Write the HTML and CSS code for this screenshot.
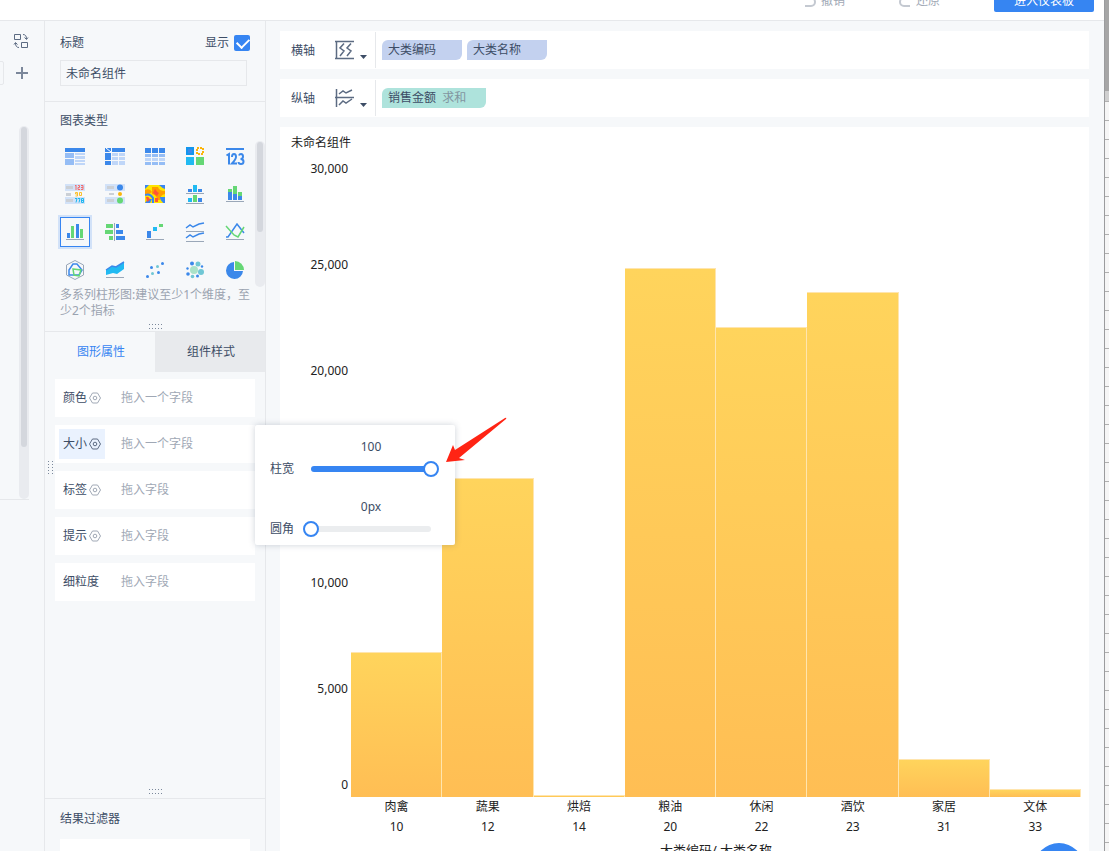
FILE: index.html
```html
<!DOCTYPE html>
<html lang="zh-CN">
<head>
  <meta charset="UTF-8" />
  <title>未命名组件</title>
  <link rel="stylesheet" href="styles.css">
</head>
<body>
  <div class="app">
    <header class="topbar">
      <button type="button" class="history">
        <svg width="12" height="12" viewBox="0 0 12 12"><path d="M1 3h6a4 4 0 0 1 0 8H1" /></svg>
        撤销
      </button>
      <button type="button" class="history">
        <svg width="12" height="12" viewBox="0 0 12 12"><path d="M11 3H5a4 4 0 0 0 0 8h6" /></svg>
        还原
      </button>
      <button type="button" class="enter">进入仪表板</button>
    </header>

    <div class="workspace">
      <!-- Field list -->
      <aside class="fields">
        <div class="search-edge"></div>
        <div class="field-tools">
          <button type="button" class="icon-btn" aria-label="切换">
            <svg width="16" height="16" viewBox="0 0 16 16"><path d="M1.500 1.500h6v5h-6zM8.500 9.500h6v5h-6zM10 1.500q3.500 0 3.500 4.500M11.500 4.500l2 2 1.500-2M6 14.500q-3.500 0-3.500-4.500M1 11.500l1.500-2 2 2" /></svg>
          </button>
          <button type="button" class="icon-btn" aria-label="添加">
            <svg width="16" height="16" viewBox="0 0 16 16"><path class="plus" d="M9 2v12M3 8h12" /></svg>
          </button>
        </div>
        <div class="field-scroll"><div class="thumb"></div></div>
      </aside>

      <!-- Settings -->
      <aside class="settings">
        <section class="title-box">
          <div class="title-row">
            <label for="compName">标题</label>
            <label class="show">显示 <input type="checkbox" checked></label>
          </div>
          <input type="text" id="compName" value="未命名组件">
        </section>

        <section class="types">
          <h2>图表类型</h2>
          <div class="type-grid">
            <button type="button" aria-label="分组表"><svg width="20" height="18" viewBox="0 0 20 18"><path class="b" d="M0 1h20v4H0z"/><path class="m" d="M0 6h9v5H0zM0 12h9v6H0z"/><path class="l" d="M10 6h10v2H10zM10 9h10v3H10zM10 13h10v2H10zM10 16h10v2H10z"/></svg></button>
            <button type="button" aria-label="交叉表"><svg width="20" height="18" viewBox="0 0 20 18"><path class="b" d="M0 1h6v4H0zM7 1h13v4H7zM0 6h6v7H0zM0 14h6v4H0z"/><path class="l" d="M7 6h6v3H7zM14 6h6v3h-6zM7 10h6v3H7zM14 10h6v3h-6zM7 14h6v4H7zM14 14h6v4h-6z"/><path class="w" d="M1 1l5 4"/></svg></button>
            <button type="button" aria-label="明细表"><svg width="20" height="18" viewBox="0 0 20 18"><path class="b" d="M0 1h6v5H0zM7 1h6v5H7zM14 1h6v5h-6z"/><path class="m" d="M0 7h6v3H0zM7 7h6v3H7zM14 7h6v3h-6zM0 15h6v3H0zM7 15h6v3H7zM14 15h6v3h-6z"/><path class="l" d="M0 11h6v3H0zM7 11h6v3H7zM14 11h6v3h-6z"/></svg></button>
            <button type="button" aria-label="颜色表格"><svg width="20" height="18" viewBox="0 0 20 18"><path fill="#1296ed" d="M1 0h8v8H1z"/><path class="b" d="M3 2h4v4H3z"/><path class="dots" d="M12 1h6v6h-6z"/><path class="c" d="M1 10h8v8H1z"/><path class="g" d="M11 10h8v8h-8z"/></svg></button>
            <button type="button" aria-label="指标卡"><svg width="20" height="18" viewBox="0 0 20 18"><path class="b" d="M1 1h18v2H1z"/><path class="s two" d="M1.500 8.500L4 7v10.500M7 10q0-3 2-3t2 3q0 2-4 6.500h5M14 8.500Q14.500 7 16 7q2 0 2 2.500T15.500 12q3 0 3 2.500t-2.500 2.500-2.500-2"/></svg></button>

            <button type="button" aria-label="KPI 指标卡"><svg width="20" height="20" viewBox="0 0 20 20"><path class="l pale" d="M0 0h20v7H0zM0 13h20v7H0z"/><path class="grey" d="M1 2h7v3H1zM1 9h5v3H1zM1 15h7v3H1z"/><path stroke="#f46b6b" d="M11 1v5M10 1.500h1M13 1.500h1.500V3.500h-1.500v2h2M16 1.500h2v4h-2M16 3.500h2"/><path stroke="#fbc02d" d="M12.500 10h-2V8.500h2V12h-2M14.500 8.500h2v3h-2z"/><path stroke="#1eb8f0" d="M10 14.500h2l-1 4M13 14.500h2l-1 4M16.500 14.500h2v4h-2zM16 16.500h2"/></svg></button>
            <button type="button" aria-label="标记表"><svg width="20" height="20" viewBox="0 0 20 20"><path class="l pale" d="M0 0h20v7H0zM0 13h20v7H0z"/><path class="grey" d="M2 2h7v3H2zM4 9h5v2H4zM2 15h7v3H2z"/><circle class="b" cx="15" cy="3.500" r="3"/><circle class="y" cx="15" cy="10" r="2"/><circle class="g" cx="15" cy="16.500" r="3"/></svg></button>
            <button type="button" aria-label="热力图"><svg width="20" height="18" viewBox="0 0 20 18"><path fill="#ffe600" d="M0 0h20v18H0z"/><path fill="#3986f3" d="M0 0h4L0 4zM14 0h6v4q-3-1-6-4zM16 12h4v6h-2zM3 14h4l-2 4H0z"/><path fill="#ff9d00" d="M7 2h6q1 4 7 4v3q-5 1-5 6h-3q0-5-5-6zM0 5q5-2 7 2L4 9H0z"/><path fill="#ff5438" d="M10 4q2 3 4 4l-2 3-4-3zM1 12q3-1 4 3l-3 2zM10 13h3v4h-3z"/><path stroke="#3986f3" stroke-width="2" d="M0 10q5-2 8 3v5M16 12q0 3 3 5"/></svg></button>
            <button type="button" aria-label="分区柱形图"><svg width="20" height="20" viewBox="0 0 20 20"><path class="b" d="M3 5h4v3H3zM13 5h4v3h-4zM13 14h4v4h-4z"/><path class="c" d="M8 1h4v7H8zM3 14h4v4H3z"/><path class="g" d="M8 11h4v7H8z"/><path class="axis" d="M1 9.500h18M1 19.500h18"/></svg></button>
            <button type="button" aria-label="堆积柱形图"><svg width="20" height="18" viewBox="0 0 20 18"><path class="g" d="M3 4h4v3H3zM8 1h4v8H8zM13 7h4v4h-4z"/><path class="b" d="M3 7h4v8H3zM8 9h4v6H8zM13 11h4v4h-4z"/><path class="axis" d="M1 16.500h18"/></svg></button>

            <button type="button" class="picked" aria-label="多系列柱形图"><svg width="20" height="18" viewBox="0 0 20 18"><path class="b" d="M2 10h3v5H2zM11 1h3v14h-3z"/><path class="g" d="M6 3h3v12H6zM15 6h3v9h-3z"/><path class="axis" d="M1 16.500h18"/></svg></button>
            <button type="button" aria-label="对比柱形图"><svg width="20" height="18" viewBox="0 0 20 18"><path class="g" d="M1 1h7v4H1zM0 7h8v4H0zM4 13h4v4H4z"/><path class="b" d="M11 1h3v4h-3zM11 7h7v4h-7zM11 13h9v4h-9z"/><path class="axis" d="M9.500 0v18"/></svg></button>
            <button type="button" aria-label="瀑布图"><svg width="20" height="18" viewBox="0 0 20 18"><path class="b" d="M2 8h4v7H2z"/><path class="c" d="M8 4h4v4H8z"/><path class="g" d="M14 1h4v3h-4z"/><path class="axis" d="M1 16.500h18"/></svg></button>
            <button type="button" aria-label="分区折线图"><svg width="20" height="20" viewBox="0 0 20 20"><path class="s" d="M1 6l4-3 3 2 6-3 5-1M1 16l4-3 3 2 6-3 5-1"/><path class="axis" d="M1 9.500h18M1 19.500h18"/></svg></button>
            <button type="button" aria-label="折线图"><svg width="20" height="18" viewBox="0 0 20 18"><path class="s" d="M1 14h2L12 1l7 9"/><path class="s green" d="M1 3l8 9 4 2 6-10"/><path class="axis" d="M1 16.500h18"/></svg></button>

            <button type="button" aria-label="雷达图"><svg width="20" height="20" viewBox="0 0 20 20"><path class="axis" d="M10 .5l8.500 4.500v10L10 19.500 1.500 15V5z"/><path class="s" d="M8 4h4l5 6-3 5H4l0-5z"/><path class="s green" d="M8 9l8 1-2 6-5-1z"/></svg></button>
            <button type="button" aria-label="面积图"><svg width="20" height="18" viewBox="0 0 20 18"><path class="c" d="M1 9l6-4 4 1 8-5v7l-7 5-4-1-7 2z"/><path class="s" d="M1 9l6-4 4 1 8-5"/><path class="axis" d="M1 16.500h18"/></svg></button>
            <button type="button" aria-label="散点图"><svg width="20" height="18" viewBox="0 0 20 18"><g class="b"><circle cx="2.500" cy="15.500" r="1.500"/><circle cx="6.500" cy="6.500" r="1.500"/><circle cx="13.500" cy="11.500" r="1.500"/><circle cx="17.500" cy="2.500" r="1.500"/></g><g fill="#70c7d5"><circle cx="12.500" cy="5.500" r="1.500"/><circle cx="7.500" cy="12.500" r="1.500"/></g></svg></button>
            <button type="button" aria-label="气泡图"><svg width="20" height="18" viewBox="0 0 20 18"><circle fill="#aae2c8" cx="9" cy="9" r="4"/><g fill="#70c7d5"><circle cx="13" cy="3" r="2.500"/><circle cx="16" cy="11" r="3"/><circle cx="7.500" cy="15.500" r="1.800"/></g><g class="b"><circle cx="7" cy="2.500" r="2"/><circle cx="2.500" cy="7.500" r="1.200"/><circle cx="3" cy="13" r="1.800"/><circle cx="12.500" cy="15" r="1.500"/><circle cx="17" cy="5.500" r="1.200"/></g></svg></button>
            <button type="button" aria-label="饼图"><svg width="20" height="18" viewBox="0 0 20 18"><path class="b" d="M9 1a8.500 8.500 0 1 0 9 9H9z"/><path class="g" d="M10 0a9 9 0 0 1 9 9h-9z"/></svg></button>
          </div>
          <p class="hint">多系列柱形图:建议至少1个维度，至少2个指标</p>
          <div class="grip"></div>
          <div class="type-scroll"><div class="thumb"></div></div>
        </section>

        <nav class="tabs">
          <button type="button" class="tab active">图形属性</button>
          <button type="button" class="tab">组件样式</button>
        </nav>

        <section class="props">
          <div class="prop">
            <button type="button" class="prop-name">颜色 <svg class="gear" width="12" height="12" viewBox="0 0 12 12"><path d="M3.500 1h5L11.500 6 8.500 11h-5L.5 6z"/><circle cx="6" cy="6" r="1.800"/></svg></button>
            <span>拖入一个字段</span>
          </div>
          <div class="prop">
            <button type="button" class="prop-name open">大小 <svg class="gear" width="12" height="12" viewBox="0 0 12 12"><path d="M3.500 1h5L11.500 6 8.500 11h-5L.5 6z"/><circle cx="6" cy="6" r="1.800"/></svg></button>
            <span>拖入一个字段</span>
            <div class="popover">
              <output for="barWidth">100</output>
              <div class="slide-row">
                <label for="barWidth">柱宽</label>
                <div class="track full"><input type="range" id="barWidth" min="0" max="100" value="100"></div>
              </div>
              <output for="barRadius">0px</output>
              <div class="slide-row">
                <label for="barRadius">圆角</label>
                <div class="track"><input type="range" id="barRadius" min="0" max="100" value="0"></div>
              </div>
              <svg class="arrow" width="62" height="48" viewBox="0 0 62 48"><path d="M1 45L8 28l2 5L60 1q2-1 1 1L14 41l6 2z"/></svg>
            </div>
          </div>
          <div class="prop">
            <button type="button" class="prop-name">标签 <svg class="gear" width="12" height="12" viewBox="0 0 12 12"><path d="M3.500 1h5L11.500 6 8.500 11h-5L.5 6z"/><circle cx="6" cy="6" r="1.800"/></svg></button>
            <span>拖入字段</span>
          </div>
          <div class="prop">
            <button type="button" class="prop-name">提示 <svg class="gear" width="12" height="12" viewBox="0 0 12 12"><path d="M3.500 1h5L11.500 6 8.500 11h-5L.5 6z"/><circle cx="6" cy="6" r="1.800"/></svg></button>
            <span>拖入字段</span>
          </div>
          <div class="prop">
            <button type="button" class="prop-name">细粒度</button>
            <span>拖入字段</span>
          </div>
          <div class="grip"></div>
          <div class="grip side"></div>
        </section>

        <section class="filters">
          <h2>结果过滤器</h2>
          <div class="filter-drop"></div>
        </section>
      </aside>

      <!-- Axes and chart -->
      <main class="board">
        <div class="axis-row">
          <span class="axis-name">横轴</span>
          <button type="button" class="axis-kind" aria-label="横轴类型">
            <svg width="34" height="22" viewBox="0 0 34 22"><path d="M1 2.500h19M1 19.500h19M2.500 2v18M10 4.500L6 9l4 3-4 5M17 4.500L13 9l4 3-4 5"/><path class="caret" d="M26 16h7l-3.500 4z"/></svg>
          </button>
          <div class="pills">
            <span class="pill">大类编码</span>
            <span class="pill">大类名称</span>
          </div>
        </div>
        <div class="axis-row">
          <span class="axis-name">纵轴</span>
          <button type="button" class="axis-kind" aria-label="纵轴类型">
            <svg width="34" height="22" viewBox="0 0 34 22"><path d="M2.500 2v18M1 10.500h19M5 7l4-3 3 2 6-3M5 18l4-4 3 2 6-4"/><path class="caret" d="M26 16h7l-3.500 4z"/></svg>
          </button>
          <div class="pills">
            <span class="pill measure">销售金额 <em>求和</em></span>
          </div>
        </div>

        <section class="chart">
          <h1>未命名组件</h1>
          <div class="plot">
            <div class="y-axis">
              <span>30,000</span>
              <span>25,000</span>
              <span>20,000</span>
              <span>15,000</span>
              <span>10,000</span>
              <span>5,000</span>
              <span>0</span>
            </div>
            <div class="bars" id="bars"></div>
          </div>
          <div class="x-axis">
            <div class="x-labels" id="labels"></div>
            <div class="x-title">大类编码/ 大类名称</div>
          </div>
        </section>
      </main>
    </div>
    <button type="button" class="float" aria-label="帮助"></button>
  </div>
  <div class="backdrop"></div>

  <script>
    const max = 30000;
    const rows = [
      ['肉禽', 10, 6800],
      ['蔬果', 12, 15000],
      ['烘焙', 14, 90],
      ['粮油', 20, 24880],
      ['休闲', 22, 22100],
      ['酒饮', 23, 23740],
      ['家居', 31, 1790],
      ['文体', 33, 370],
    ];

    const bars = document.getElementById('bars');
    const labels = document.getElementById('labels');

    rows.forEach(([name, code, value]) => {
      const bar = document.createElement('div');
      bar.className = 'bar';
      bar.style.height = `${value / max * 100}%`;
      bars.appendChild(bar);

      const label = document.createElement('div');
      label.innerHTML = `<div>${name}</div><div>${code}</div>`;
      labels.appendChild(label);
    });
  </script>
</body>
</html>
```
FILE: styles.css
```css
* {
  box-sizing: border-box;
}
body {
  margin: 0;
  display: flex;
  height: 100vh;
  overflow: hidden;
  font-family: "Noto Sans", "Noto Sans CJK SC", sans-serif;
  font-size: 12px;
  line-height: 20px;
  color: #3d4d66;
}
button, input {
  font: inherit;
  color: inherit;
}
button {
  padding: 0;
  border: 0;
  background: none;
  cursor: pointer;
}
svg {
  display: block;
  fill: none;
}
h1, h2 {
  margin: 0;
  font-size: 12px;
  font-weight: 400;
}

.app {
  position: relative;
  flex: 1;
  min-width: 0;
  display: flex;
  flex-direction: column;
  background: #f6f8fa;
  overflow: hidden;
}
.backdrop {
  width: 5px;
  border-left: 1px solid #9b9c9e;
  background:
    linear-gradient(#a6a6a6 91px, #cfcfcf 91px, #cfcfcf 101px, transparent 101px),
    repeating-linear-gradient(#f6f6f6 0, #f6f6f6 6px, #b0b0b0 6px, #b0b0b0 7px, #f6f6f6 7px, #f6f6f6 19px);
}

/* top bar */
.topbar {
  height: 21px;
  flex: none;
  display: flex;
  justify-content: flex-end;
  align-items: flex-end;
  padding: 0 10px 8px 0;
  border-bottom: 1px solid #e6e8eb;
  background: #fff;
}
.history {
  display: flex;
  align-items: center;
  gap: 5px;
  height: 24px;
  margin-right: 54px;
  padding-top: 2px;
  color: #a0a8b5;
}
.history svg {
  stroke: #c4c9d1;
  stroke-width: 2;
}
.enter {
  width: 100px;
  height: 24px;
  padding-top: 2px;
  border-radius: 2px;
  background: #3685f2;
  color: #fff;
}

.workspace {
  flex: 1;
  min-height: 0;
  display: flex;
}

/* left strip */
.fields {
  width: 44px;
  flex: none;
  position: relative;
}
.field-tools {
  display: flex;
  flex-direction: column;
  gap: 16px;
  padding: 12px 0 0 13px;
  height: 105px;
}
.icon-btn {
  width: 16px;
  height: 16px;
  stroke: #5c6b82;
}
.plus {
  stroke-width: 2;
  stroke: #7b879a;
}
.search-edge {
  position: absolute;
  top: 40px;
  left: -4px;
  width: 8px;
  height: 24px;
  border: 1px solid #e6e8eb;
  border-radius: 2px;
}
.field-scroll {
  width: 29px;
  height: 374px;
  padding-left: 19px;
  border-bottom: 1px solid #e6e8eb;
}
.field-scroll::before {
  content: "";
  display: block;
  height: 373px;
  margin-bottom: -373px;
  border-radius: 5px;
  background: #e9ebef;
}
.thumb {
  position: relative;
  width: 6px;
  margin: 1px 2px;
  border-radius: 3px;
  background: #d4d7dd;
}
.field-scroll .thumb {
  height: 320px;
}

/* settings panel */
.settings {
  width: 222px;
  flex: none;
  display: flex;
  flex-direction: column;
  border: solid #e6e8eb;
  border-width: 0 1px;
}
.title-box {
  height: 81px;
  padding: 12px 15px 0;
  border-bottom: 1px solid #e6e8eb;
}
.title-row {
  display: flex;
  justify-content: space-between;
  align-items: center;
}
.show {
  display: flex;
  align-items: center;
  gap: 5px;
}
.show input {
  appearance: none;
  width: 16px;
  height: 16px;
  margin: 0;
  border-radius: 2px;
  background: #3685f2;
}
.show input:checked::before {
  content: "";
  display: block;
  width: 10px;
  height: 6px;
  margin: 3px;
  border: solid #fff;
  border-width: 0 0 2px 2px;
  transform: rotate(-45deg);
}
.title-box input[type="text"] {
  display: block;
  width: 187px;
  height: 26px;
  margin-top: 7px;
  padding: 0 5px 1px;
  border: 1px solid #e6e8eb;
  background: none;
}
.types {
  position: relative;
  height: 230px;
  padding: 9px 10px 0;
  border-bottom: 1px solid #e6e8eb;
}
.types h2 {
  padding-left: 5px;
}
.type-grid {
  display: grid;
  grid-template-columns: repeat(5, 40px);
  grid-auto-rows: 38px;
  margin-top: 6px;
}
.type-grid button {
  display: flex;
  align-items: center;
  justify-content: center;
}
.type-grid .picked {
  width: 30px;
  height: 30px;
  margin: 4px 5px;
  border: 1px solid #3685f2;
  box-shadow: 0 0 0 2px #d2e2f8;
}
.b { fill: #3b88ea; }
.m { fill: #95bdf5; }
.l { fill: #bfd6f8; }
.pale { fill: #d2e2f8; }
.c { fill: #21baf2; }
.g { fill: #65d775; }
.y { fill: #fbb50a; }
.grey { fill: #cbd0d6; }
.w { stroke: #fff; }
.s { stroke: #3b88ea; stroke-width: 1.5; }
.two { stroke-width: 2; }
.green { stroke: #65d775; }
.axis { stroke: #9aa7b8; }
.dots { stroke: #fbb50a; stroke-width: 2; stroke-dasharray: 2 1; }
.hint {
  margin: -2px 0 0;
  padding: 0 3px 0 5px;
  line-height: 16px;
  color: #9ba3b0;
}
.grip {
  width: 13px;
  height: 5px;
  margin: 5px auto 0;
  background: repeating-linear-gradient(90deg, #7b889b 0 1px, transparent 1px 3px);
  mask: linear-gradient(#000 1px, transparent 1px, transparent 4px, #000 4px);
}
.type-scroll {
  position: absolute;
  top: 39px;
  right: 0;
  width: 10px;
  height: 146px;
  border-radius: 5px;
  background: #e9ebef;
}
.type-scroll .thumb {
  height: 90px;
}
.tabs {
  display: flex;
  height: 40px;
}
.tab {
  flex: 1;
  padding-left: 2px;
  background: #e8eaed;
}
.tab.active {
  background: none;
  color: #3685f2;
}
.props {
  position: relative;
  flex: 1;
  display: flex;
  flex-direction: column;
  gap: 8px;
  padding: 7px 10px 4px;
  border-bottom: 1px solid #e6e8eb;
}
.prop {
  position: relative;
  display: flex;
  align-items: center;
  height: 38px;
  padding: 0 4px;
  background: #fff;
  color: #a0a8b5;
}
.prop-name {
  display: flex;
  align-items: center;
  gap: 2px;
  width: 46px;
  height: 30px;
  margin-right: 16px;
  padding-left: 4px;
  white-space: nowrap;
  color: #3d4d66;
}
.prop-name.open {
  background: #eaf2fe;
}
.gear {
  stroke: #a0a8b5;
}
.open .gear {
  stroke: #5c6b82;
}
.props .grip {
  margin-top: auto;
}
.props .grip.side {
  position: absolute;
  top: 93px;
  left: -1px;
  margin: 0;
  transform: rotate(90deg);
}

/* size popover */
.popover {
  position: absolute;
  z-index: 2;
  top: 0;
  left: 100%;
  width: 200px;
  height: 120px;
  padding: 12px 24px 0 15px;
  border-radius: 2px;
  background: #fff;
  box-shadow: 0 0 6px rgba(61, 77, 102, 0.25);
  color: #3d4d66;
}
.popover output {
  display: block;
  width: 120px;
  height: 22px;
  margin-left: auto;
  text-align: center;
}
.slide-row {
  display: flex;
  align-items: center;
  justify-content: space-between;
  height: 20px;
  margin-bottom: 18px;
}
.track {
  display: flex;
  align-items: center;
  width: 120px;
  height: 6px;
  border-radius: 3px;
  background: #ebedef;
}
.track.full {
  background: #3685f2;
}
.track input {
  appearance: none;
  flex: none;
  width: 136px;
  height: 16px;
  margin: 0 -8px;
  background: none;
}
.track input::-webkit-slider-thumb {
  appearance: none;
  width: 16px;
  height: 16px;
  border: 2px solid #3685f2;
  border-radius: 50%;
  background: #fff;
}
.arrow {
  position: absolute;
  top: -8px;
  left: 190px;
  fill: #ff2414;
}

.filters {
  height: 52px;
  flex: none;
  padding: 10px 15px 0;
  overflow: hidden;
}
.filter-drop {
  height: 40px;
  margin-top: 10px;
  background: #fff;
}

/* axis rows and chart */
.board {
  flex: 1;
  min-width: 0;
  display: flex;
  flex-direction: column;
  gap: 10px;
  padding: 10px 15px 0 14px;
}
.axis-row {
  display: flex;
  align-items: center;
  height: 38px;
  flex: none;
  padding-left: 11px;
  background: #fff;
}
.axis-name {
  width: 43px;
  padding-top: 2px;
}
.axis-kind {
  display: flex;
  align-items: center;
  width: 42px;
  height: 36px;
  border-right: 1px solid #e6e8eb;
}
.axis-kind svg {
  stroke: #5c6b82;
  stroke-width: 1.5;
}
.axis-kind .caret {
  fill: #3d4d66;
  stroke: none;
}
.pills {
  display: flex;
  gap: 5px;
  padding-left: 6px;
}
.pill {
  min-width: 80px;
  padding: 0 20px 0 6px;
  border-radius: 6px 0;
  background: #c3d1ef;
}
.pill.measure {
  background: #aee3dc;
}
.pill em {
  margin-left: 3px;
  font-style: normal;
  color: #8295a0;
}
.chart {
  flex: 1;
  min-height: 0;
  display: flex;
  flex-direction: column;
  padding: 6px 8px 0 11px;
  background: #fff;
  color: #222;
}
.plot {
  flex: 1;
  min-height: 0;
  display: flex;
  margin-top: 6px;
}
.y-axis {
  width: 60px;
  display: flex;
  flex-direction: column;
  padding-right: 3px;
  text-align: right;
}
.y-axis span {
  flex: 2 2 0;
  display: flex;
  align-items: center;
  justify-content: flex-end;
}
.y-axis span:first-child {
  flex-grow: 1;
  align-items: flex-start;
}
.y-axis span:last-child {
  flex-grow: 1;
  align-items: flex-end;
  padding-bottom: 2px;
}
.bars {
  flex: 1;
  display: flex;
  align-items: flex-end;
}
.bar {
  flex: 1;
  border: solid #ffe5ae;
  border-width: 1px 1px 0 0;
  background: linear-gradient(#ffd45c, #ffbe54);
}
.x-axis {
  height: 54px;
  flex: none;
  margin-left: 60px;
  text-align: center;
}
.x-labels {
  display: flex;
}
.x-labels > div {
  flex: 1;
}
.x-title {
  margin-top: 3px;
  font-size: 13px;
}

.float {
  position: absolute;
  right: 20px;
  bottom: -42px;
  width: 50px;
  height: 50px;
  border-radius: 50%;
  background: #3685f2;
}
```
